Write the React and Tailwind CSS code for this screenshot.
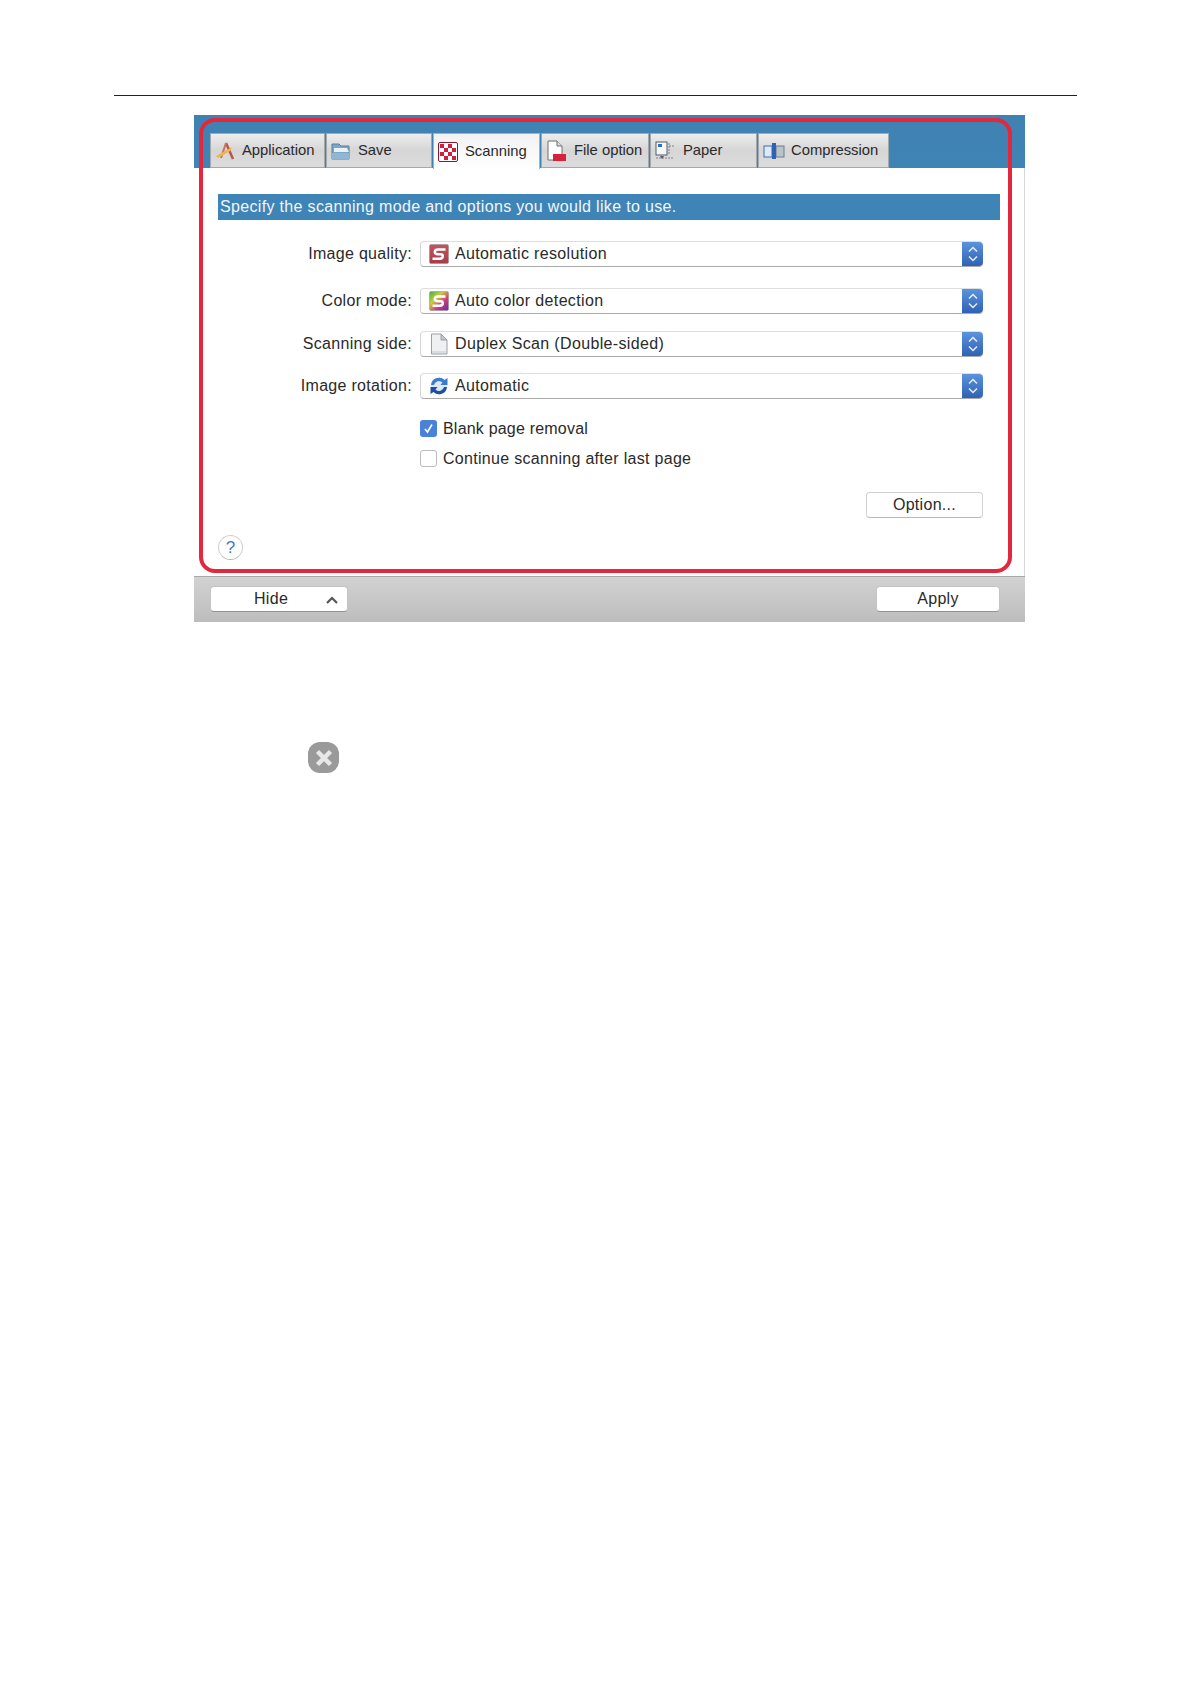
const font = { fontFamily: '"Liberation Sans", Arial, sans-serif' };

function SIcon({ bg }) {
  const id = bg === "color" ? "rainbow" : "redfill";
  return (
    <svg width="20" height="20" viewBox="0 0 20 20" className="shrink-0">
      <defs>
        <linearGradient id="rainbow" x1="0" y1="0" x2="1" y2="1">
          <stop offset="0" stopColor="#3fae3f" />
          <stop offset="0.35" stopColor="#c9d040" />
          <stop offset="0.65" stopColor="#d03a80" />
          <stop offset="1" stopColor="#5a2fa0" />
        </linearGradient>
        <linearGradient id="redfill" x1="0" y1="0" x2="0" y2="1">
          <stop offset="0" stopColor="#c25560" />
          <stop offset="1" stopColor="#a63c48" />
        </linearGradient>
      </defs>
      <rect x="0.5" y="0.5" width="19" height="19" rx="1.5" fill={`url(#${id})`} stroke="#8f8f8f" strokeWidth="0.5" />
      <path d="M16.5 5.5H9Q6 5.5 5.8 7.8T9 10.2H11.5Q14 10.2 13.8 12.3T10.8 14.7H3.5" fill="none" stroke="#fff" strokeWidth="2.5" />
    </svg>
  );
}

function DocIcon() {
  return (
    <svg width="20" height="22" viewBox="0 0 20 22" className="shrink-0">
      <path d="M2.5 1H12L18 7V21H2.5Z" fill="#eef0f2" stroke="#9aa0a6" />
      <path d="M12 1V7H18Z" fill="#c4c8cc" stroke="#9aa0a6" />
      <path d="M3 19H18" stroke="#c5c9cd" />
    </svg>
  );
}

function RotateIcon() {
  return (
    <svg width="20" height="20" viewBox="0 0 20 20" className="shrink-0">
      <circle cx="10" cy="10" r="8.5" fill="#dce8f6" />
      <path d="M2 9A8 8 0 0 1 15.5 4L18.5 2V9H11.5L13.5 6.5A5 5 0 0 0 5 9Z" fill="#3a7ccc" />
      <path d="M18 11A8 8 0 0 1 4.5 16L1.5 18V11H8.5L6.5 13.5A5 5 0 0 0 15 11Z" fill="#1f4f9f" />
    </svg>
  );
}

function Stepper() {
  return (
    <div className="w-[21px] h-full shrink-0 rounded-r-[4px] bg-gradient-to-b from-[#5b93dc] to-[#2f62b4] flex items-center justify-center">
      <svg width="12" height="18" viewBox="0 0 12 18" fill="none" stroke="#e8eefa" strokeWidth="1.5">
        <path d="M2 6.5L6 2.5L10 6.5" />
        <path d="M2 11.5L6 15.5L10 11.5" />
      </svg>
    </div>
  );
}

function Row({ label, icon, value, mt }) {
  return (
    <div className={`flex items-center h-[26px] ${mt}`}>
      <div className="w-[195px] text-right text-[16px] tracking-[0.3px] text-[#2a2a2a] whitespace-nowrap">{label}</div>
      <div className="ml-[8px] w-[563px] h-[26px] flex items-stretch rounded-[4px] bg-white border-t border-[#dedede] border-b border-b-[#aaaaaa] border-l border-l-[#d4d4d4]">
        <div className="flex-1 flex items-center pl-[8px] gap-[6px] text-[16px] tracking-[0.35px] text-[#2a2a2a] whitespace-nowrap">
          <span className="w-[20px] flex justify-center">{icon}</span>
          {value}
        </div>
        <Stepper />
      </div>
    </div>
  );
}

function Tab({ icon, label, w, active, gap = "gap-[6px]", pl = "pl-[4px]" }) {
  return (
    <div
      className={`flex items-center ${pl} ${gap} text-[14.8px] text-[#2a2a2a] whitespace-nowrap border-x border-t ${
        active
          ? "bg-gradient-to-b from-[#f2f2f2] to-white border-[#a9b1b8] h-[36px]"
          : "h-[35px] bg-gradient-to-b from-[#ededed] via-[#d6d6d6] to-[#dcdcdc] border-[#a2a9ae] border-b"
      } ${w}`}
    >
      {icon}
      {label}
    </div>
  );
}

const AppIcon = (
  <svg width="22" height="20" viewBox="0 0 22 20" className="shrink-0">
    <path d="M11 2L18 18" stroke="#b9574d" strokeWidth="2.5" fill="none" />
    <path d="M11 2L6 17" stroke="#c9705f" strokeWidth="2" fill="none" />
    <path d="M1 15L17 6L15 10L3 17Z" fill="#e8b94a" />
  </svg>
);
const SaveIcon = (
  <svg width="20" height="20" viewBox="0 0 20 20" className="shrink-0">
    <path d="M1 3H8L10 5H18V18H1Z" fill="#7ba6c7" stroke="#5a7f9b" />
    <path d="M3 7H16L18 11H3Z" fill="#eaf0f5" />
    <path d="M1 12H18V18H1Z" fill="#8fb6d2" />
  </svg>
);
const CheckerIcon = (
  <svg width="20" height="20" viewBox="0 0 20 20" className="shrink-0">
    <rect x="0.5" y="0.5" width="19" height="19" rx="1.5" fill="#fff" stroke="#8a1a2a" />
    <path d="M2 2h4v4H2zM10 2h4v4h-4zM6 6h4v4H6zM14 6h4v4h-4zM2 10h4v4H2zM10 10h4v4h-4zM6 14h4v4H6zM14 14h4v4h-4z" fill="#cf1f3c" />
  </svg>
);
const FileIcon = (
  <svg width="22" height="22" viewBox="0 0 22 22" className="shrink-0">
    <path d="M2 1H11L16 6V20H2Z" fill="#fff" stroke="#6a6f75" />
    <path d="M11 1V6H16" fill="#ddd" stroke="#6a6f75" />
    <rect x="7" y="14" width="13" height="7" fill="#d8213a" />
  </svg>
);
const PaperIcon = (
  <svg width="20" height="20" viewBox="0 0 20 20" className="shrink-0">
    <rect x="1" y="1" width="11" height="13" fill="#f4f6f8" stroke="#555c64" />
    <rect x="3" y="3" width="4" height="3" fill="#2f6fc0" />
    <path d="M14 2V14M14 5H19M1 17H18" stroke="#7c838a" strokeDasharray="2 1" fill="none" />
    <path d="M5 15L7 18L9 15Z" fill="#555c64" />
  </svg>
);
const CompressIcon = (
  <svg width="22" height="18" viewBox="0 0 22 18" className="shrink-0">
    <rect x="1" y="4" width="8" height="11" fill="#dfe9f5" stroke="#3f6fb0" />
    <rect x="13" y="4" width="8" height="11" fill="#b9c3cc" stroke="#6f7c88" />
    <rect x="9" y="1" width="4" height="16" fill="#2f62b4" />
  </svg>
);

export default function App() {
  return (
    <div className="w-[1191px] h-[1684px] bg-white overflow-hidden" style={font}>
      <div className="pt-[95px] pl-[114px]">
        <div className="w-[963px] h-[1px] bg-[#222]" />
      </div>

      <div className="relative ml-[194px] mt-[19px] w-[831px]">
        {/* header with tabs */}
        <div className="h-[53px] bg-gradient-to-b from-[#3f82b2] to-[#3f84b6] pt-[18px] pl-[16px] flex items-start gap-[1px]">
          <Tab icon={AppIcon} label="Application" w="w-[115px]" gap="gap-[5px]" />
          <Tab icon={SaveIcon} label="Save" w="w-[106px]" gap="gap-[7px]" />
          <Tab icon={CheckerIcon} label="Scanning" w="w-[107px]" active gap="gap-[7px]" />
          <Tab icon={FileIcon} label="File option" w="w-[108px]" gap="gap-[6px]" />
          <Tab icon={PaperIcon} label="Paper" w="w-[107px]" gap="gap-[8px]" />
          <Tab icon={CompressIcon} label="Compression" w="w-[131px]" gap="gap-[6px]" />
        </div>

        {/* body */}
        <div className="h-[408px] bg-white border-r border-[#d8d8d8] pt-[26px] pl-[23px] flex flex-col">
          <div className="ml-[1px] w-[782px] h-[26px] bg-[#3f84b6] pl-[2px] flex items-center text-[16px] tracking-[0.33px] text-[#f2f6fa] whitespace-nowrap">
            Specify the scanning mode and options you would like to use.
          </div>
          <div>
            <Row mt="mt-[21px]" label="Image quality:" icon={<SIcon />} value="Automatic resolution" />
            <Row mt="mt-[21px]" label="Color mode:" icon={<SIcon bg="color" />} value="Auto color detection" />
            <Row mt="mt-[17px]" label="Scanning side:" icon={<DocIcon />} value="Duplex Scan (Double-sided)" />
            <Row mt="mt-[16px]" label="Image rotation:" icon={<RotateIcon />} value="Automatic" />
          </div>
          <div className="ml-[203px] mt-[21px] flex flex-col gap-[13px] text-[16px] tracking-[0.3px] text-[#2a2a2a]">
            <div className="flex items-center h-[17px] gap-[6px]">
              <div className="w-[17px] h-[17px] rounded-[3px] bg-[#4a82d8] flex items-center justify-center">
                <svg width="11" height="11" viewBox="0 0 11 11" fill="none" stroke="#fff" strokeWidth="1.6">
                  <path d="M2 6L4.5 9L9 1.5" />
                </svg>
              </div>
              <span className="tracking-[0.2px]">Blank page removal</span>
            </div>
            <div className="flex items-center h-[17px] gap-[6px]">
              <div className="w-[17px] h-[17px] rounded-[3px] bg-white border border-[#bcbcbc]" />
              Continue scanning after last page
            </div>
          </div>
          <div className="ml-[649px] mt-[25px] w-[117px] h-[26px] rounded-[4px] bg-white border border-[#d2d2d2] border-b-[#b8b8b8] flex items-center justify-center text-[16px] tracking-[0.3px] text-[#2a2a2a]">
            Option...
          </div>
          <div className="ml-[1px] mt-[17px] w-[25px] h-[25px] rounded-full bg-white border border-[#cfcfcf] border-b-[#b5b5b5] flex items-center justify-center text-[17px] text-[#3f78c4]">
            ?
          </div>
        </div>

        {/* bottom bar */}
        <div className="h-[46px] bg-gradient-to-b from-[#d2d2d2] to-[#bdbdbd] border-t border-[#a8a8a8] flex items-center justify-between pl-[16px] pr-[25px]">
          <div className="relative w-[138px] h-[26px] rounded-[4px] bg-white border border-[#c4c4c4] border-b-[#939393] flex items-center text-[16px] tracking-[0.3px] text-[#2a2a2a] pl-[43px] -mt-[1px]">
            Hide
            <svg width="12" height="8" viewBox="0 0 12 8" fill="none" stroke="#555" strokeWidth="2.2" className="absolute right-[9px] top-[9px]">
              <path d="M1 7L6 2L11 7" />
            </svg>
          </div>
          <div className="w-[124px] h-[26px] rounded-[4px] bg-white border border-[#c4c4c4] border-b-[#939393] flex items-center justify-center text-[16px] tracking-[0.3px] text-[#2a2a2a] -mt-[1px]">
            Apply
          </div>
        </div>

        {/* red highlight overlay */}
        <div className="absolute left-[5px] top-[3px] w-[813px] h-[455px] rounded-[16px] border-[4px] border-[#e3273d] pointer-events-none" />
      </div>

      <div className="ml-[308px] mt-[120px] w-[31px] h-[31px] rounded-[12px] bg-[#9a9a9a] flex items-center justify-center">
        <svg width="20" height="20" viewBox="0 0 20 20" fill="none" stroke="#e8e8e8" strokeWidth="4.5">
          <path d="M3.5 3.5L16.5 16.5M16.5 3.5L3.5 16.5" />
        </svg>
      </div>
    </div>
  );
}
